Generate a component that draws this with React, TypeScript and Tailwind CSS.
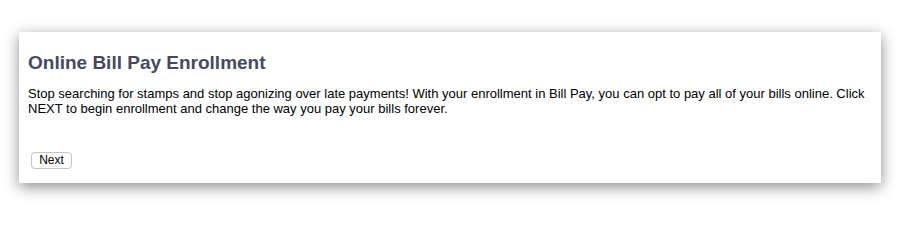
export default function App() {
  return (
    <div className="h-[216px] w-[900px] bg-white pt-8 pl-[19px] font-['Liberation_Sans',Arial,sans-serif]">
      <div className="w-[862px] h-[151px] bg-white shadow-[0_4px_14px_rgba(0,0,0,0.45)] pl-[9px] pr-3 pt-[19px]">
        <h1 className="text-[19px] leading-[23px] font-bold text-[#454a62]">Online Bill Pay Enrollment</h1>
        <p className="mt-[12px] text-[13px] leading-[15px] text-black">
          Stop searching for stamps and stop agonizing over late payments! With your enrollment in Bill Pay, you can opt to pay all of your bills online. Click NEXT to begin enrollment and change the way you pay your bills forever.
        </p>
        <button className="mt-[36px] ml-[3px] h-[17px] w-[41px] rounded-[4px] border border-[#c4c4c4] bg-white text-[12px] leading-[15px] text-black">
          Next
        </button>
      </div>
    </div>
  );
}
